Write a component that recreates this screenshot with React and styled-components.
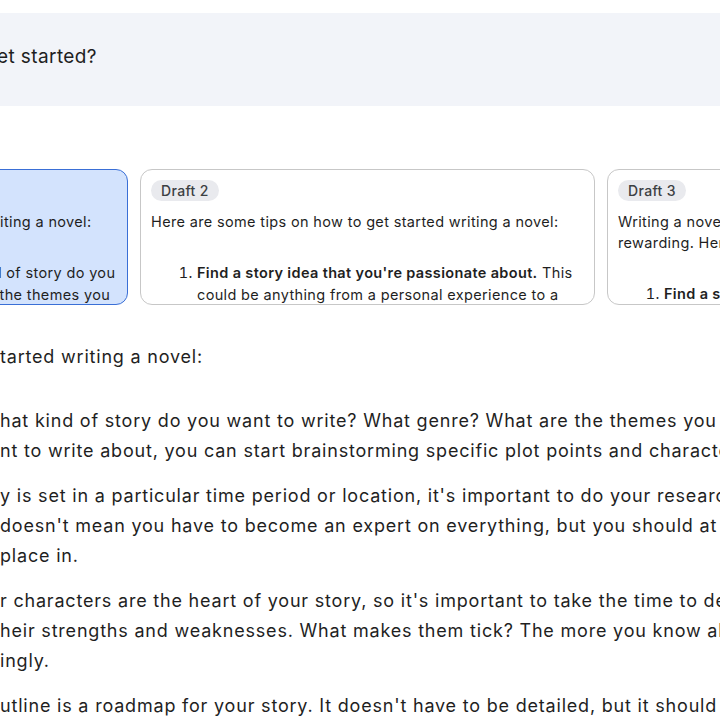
import React from "react";
import styled, { createGlobalStyle } from "styled-components";

const GlobalStyle = createGlobalStyle`
  html, body {
    margin: 0;
    padding: 0;
    background: #ffffff;
  }
  body {
    font-family: Inter, Roboto, "Liberation Sans", Arial, sans-serif;
    color: #1f1f1f;
    -webkit-font-smoothing: antialiased;
  }
`;

const drafts = [
  {
    label: "Draft 1",
    intro: ["Here are some tips on how to get started writing a novel:"],
    heading: "Come up with a story idea.",
    rest: [" What kind of story do you", "want to write? What genre? What are the themes you"],
    selected: true,
  },
  {
    label: "Draft 2",
    intro: ["Here are some tips on how to get started writing a novel:"],
    heading: "Find a story idea that you're passionate about.",
    rest: [" This", "could be anything from a personal experience to a"],
  },
  {
    label: "Draft 3",
    intro: [
      "Writing a novel can be a daunting task, but it can also be very",
      "rewarding. Here are some tips on how to get started:",
    ],
    heading: "Find a story idea that excites you.",
    rest: [""],
  },
];

const answer = [
  ["tarted writing a novel:"],
  [
    "hat kind of story do you want to write? What genre? What are the themes you want to explore?",
    "nt to write about, you can start brainstorming specific plot points and characters.",
  ],
  [
    "y is set in a particular time period or location, it's important to do your research.",
    "doesn't mean you have to become an expert on everything, but you should at least have",
    "place in.",
  ],
  [
    "r characters are the heart of your story, so it's important to take the time to develop them.",
    "heir strengths and weaknesses. What makes them tick? The more you know about them,",
    "ingly.",
  ],
  ["utline is a roadmap for your story. It doesn't have to be detailed, but it should give you"],
];

const App = () => {
  return (
    <Page>
      <GlobalStyle />
      <Prompt>
        <PromptText>et started?</PromptText>
      </Prompt>

      <DraftRow>
        {drafts.map((d) => (
          <DraftCard key={d.label} $selected={d.selected}>
            <Chip $selected={d.selected}>{d.label}</Chip>
            <CardPara>
              {d.intro.map((line, i) => (
                <CardLine key={i}>{line}</CardLine>
              ))}
            </CardPara>
            <CardList>
              <li>
                <CardLine>
                  <b>{d.heading}</b>
                  {d.rest[0]}
                </CardLine>
                {d.rest.slice(1).map((line, i) => (
                  <CardLine key={i}>{line}</CardLine>
                ))}
              </li>
            </CardList>
          </DraftCard>
        ))}
      </DraftRow>

      <Answer>
        {answer.map((para, i) => (
          <Para key={i} $first={i === 0}>
            {para.map((line, j) => (
              <Line key={j}>{line}</Line>
            ))}
          </Para>
        ))}
      </Answer>
    </Page>
  );
};

export default App;

const Page = styled.div`
  width: 720px;
  height: 720px;
  overflow: hidden;
  padding-top: 13px;
  box-sizing: border-box;
`;

const Prompt = styled.div`
  height: 93px;
  background: #f2f4f9;
  display: flex;
  align-items: center;
`;

const PromptText = styled.div`
  font-size: 19px;
  letter-spacing: 0.4px;
  white-space: nowrap;
  margin-left: -3px;
  padding-bottom: 6px;
`;

const DraftRow = styled.div`
  display: flex;
  gap: 12px;
  margin-top: 63px;
  margin-left: -327px;
`;

const DraftCard = styled.div`
  flex: 0 0 455px;
  height: 136px;
  box-sizing: border-box;
  border-radius: 12px;
  border: 1px solid ${(p) => (p.$selected ? "#3a6fd6" : "#c7c7c7")};
  background: ${(p) => (p.$selected ? "#d3e3fd" : "#ffffff")};
  padding: 10px 10px 0;
  overflow: hidden;
`;

const Chip = styled.span`
  display: inline-block;
  height: 21px;
  line-height: 21px;
  padding: 0 10px;
  border-radius: 11px;
  background: ${(p) => (p.$selected ? "#c2d6f7" : "#e9eaee")};
  color: #3c4043;
  font-size: 14px;
  font-weight: 500;
  letter-spacing: 0.35px;
`;

const CardPara = styled.div`
  margin-top: 10px;
  font-size: 14.5px;
  line-height: 21px;
  letter-spacing: 0.35px;
`;

const CardLine = styled.span`
  display: block;
  white-space: nowrap;
  min-height: 21px;
`;

const CardList = styled.ol`
  margin: 30px 0 0;
  padding-left: 46px;
  font-size: 14.5px;
  line-height: 22px;
  letter-spacing: 0.35px;

  b {
    font-weight: 600;
  }
`;

const Answer = styled.div`
  margin-top: 37px;
  font-size: 18px;
  line-height: 30px;
  letter-spacing: 0.8px;
`;

const Para = styled.div`
  margin-top: ${(p) => (p.$first ? "0" : "15px")};

  &:nth-child(2) {
    margin-top: 34px;
  }
`;

const Line = styled.span`
  display: block;
  white-space: nowrap;
`;
